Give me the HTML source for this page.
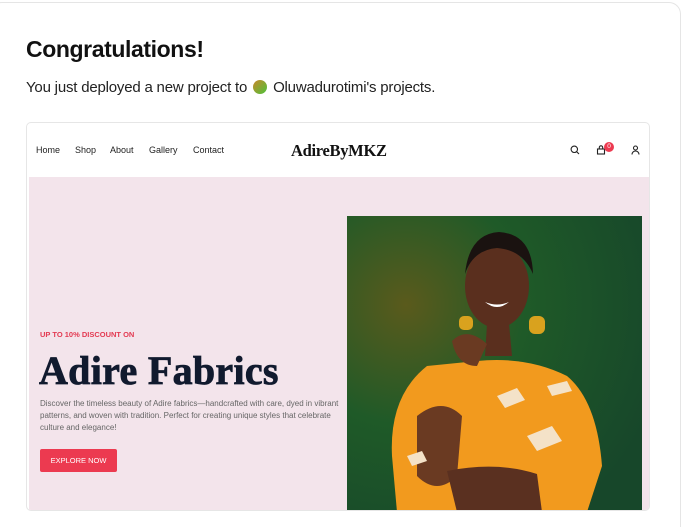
<!DOCTYPE html>
<html style="height:527px;overflow:hidden"><head><meta charset="utf-8"><style>
*{margin:0;padding:0;box-sizing:border-box}
body{width:684px;height:527px;background:#fff;font-family:"Liberation Sans",sans-serif;overflow:hidden;position:relative}
.outer{position:absolute;left:-10px;top:2px;width:691px;height:540px;border:1px solid #e5e5e5;border-bottom:none;border-radius:12px 12px 0 0}
h1{position:absolute;left:26px;top:36px;font-size:23px;font-weight:700;color:#111;letter-spacing:-0.4px}
.sub{position:absolute;left:26px;top:79px;font-size:15px;color:#222;letter-spacing:-0.2px}
.dot{display:inline-block;width:14px;height:14px;border-radius:50%;background:linear-gradient(135deg,#c9882a,#4cc23a);vertical-align:-2px;margin:0 2px}
.card{position:absolute;left:26px;top:122px;width:624px;height:389px;border:1px solid #e6e6e6;border-radius:5px;overflow:hidden;background:#fff}
.nav{position:absolute;top:22px;font-size:9px;color:#222}
.logo{position:absolute;left:264px;top:18px;font-family:"Liberation Serif",serif;font-weight:700;font-size:16.5px;color:#111;letter-spacing:-0.3px}
.hero{position:absolute;left:2px;top:54px;width:620px;height:340px;background:#f3e4eb}
.disc{position:absolute;left:11px;top:153px;font-size:7.5px;color:#e33a52;font-weight:600}
.title{position:absolute;left:10px;top:170px;font-family:"Liberation Serif",serif;font-weight:700;font-size:40px;color:#111a2e;letter-spacing:0.3px;-webkit-text-stroke:0.8px #111a2e}
.desc{position:absolute;left:11px;top:221px;width:300px;font-size:8px;line-height:12px;color:#666}
.btn{position:absolute;left:11px;top:272px;width:77px;height:23px;background:#ec3a50;border-radius:2px;color:#fff;font-size:7.5px;text-align:center;line-height:23px}
.img{position:absolute;left:318px;top:39px;width:295px;height:296px}
</style></head><body>
<div class="outer"></div>
<h1>Congratulations!</h1>
<div class="sub">You just deployed a new project to <span class="dot"></span> Oluwadurotimi's projects.</div>
<div class="card">
<div class="nav" style="left:9px">Home</div>
<div class="nav" style="left:48px">Shop</div>
<div class="nav" style="left:83px">About</div>
<div class="nav" style="left:122px">Gallery</div>
<div class="nav" style="left:166px">Contact</div>
<div class="logo">AdireByMKZ</div>
<svg style="position:absolute;left:543px;top:22px" width="10" height="10" viewBox="0 0 10 10"><circle cx="4.3" cy="4.3" r="3.2" fill="none" stroke="#222" stroke-width="1.1"/><path d="M6.6 6.6L9 9" stroke="#222" stroke-width="1.1"/></svg>
<svg style="position:absolute;left:569px;top:22px" width="10" height="10" viewBox="0 0 10 10"><rect x="1.5" y="4" width="7" height="5" fill="none" stroke="#222" stroke-width="1.1"/><path d="M3.3 4V2.5a1.7 1.7 0 0 1 3.4 0V4" fill="none" stroke="#222" stroke-width="1.1"/></svg>
<div style="position:absolute;left:577px;top:19px;width:10px;height:10px;border-radius:50%;background:#ec3a50;color:#fff;font-size:6.5px;text-align:center;line-height:10px">0</div>
<svg style="position:absolute;left:604px;top:22px" width="9" height="10" viewBox="0 0 9 10"><circle cx="4.5" cy="3" r="2" fill="none" stroke="#222" stroke-width="1.1"/><path d="M1 9.5a3.5 3.5 0 0 1 7 0" fill="none" stroke="#222" stroke-width="1.1"/></svg>
<div class="hero">
<div class="disc">UP TO 10% DISCOUNT ON</div>
<div class="title">Adire Fabrics</div>
<div class="desc">Discover the timeless beauty of Adire fabrics—handcrafted with care, dyed in vibrant patterns, and woven with tradition. Perfect for creating unique styles that celebrate culture and elegance!</div>
<div class="btn">EXPLORE NOW</div>
<svg class="img" viewBox="0 0 295 296">
<defs><radialGradient id="bg" cx="0.2" cy="0.3" r="0.9"><stop offset="0" stop-color="#5a5a1c"/><stop offset="0.45" stop-color="#1f5a28"/><stop offset="1" stop-color="#17472a"/></radialGradient></defs>
<rect width="295" height="296" fill="url(#bg)"/>
<path d="M50 296 L45 240 Q42 180 80 150 L130 145 Q180 140 220 160 Q250 185 255 250 L240 296Z" fill="#f29a1e"/>
<path d="M70 200 Q95 180 115 200 L110 260 Q90 280 70 260Z" fill="#6a3a22"/>
<path d="M100 255 Q150 245 190 258 L195 296 L110 296Z" fill="#5a3020"/>
<ellipse cx="150" cy="70" rx="32" ry="42" fill="#5a2f1e"/>
<path d="M118 58 Q122 18 152 16 Q185 18 186 58 Q176 34 150 32 Q126 34 118 58Z" fill="#1a1210"/>
<path d="M140 108 L162 108 L165 140 L138 140Z" fill="#5a2f1e"/>
<path d="M138 86 Q150 96 162 86 Q150 91 138 86Z" fill="#fff"/>
<rect x="182" y="100" width="16" height="18" rx="6" fill="#d9a21e"/>
<rect x="112" y="100" width="14" height="14" rx="5" fill="#d9a21e"/>
<path d="M105 125 Q120 110 140 128 L130 150 Q110 150 105 125Z" fill="#6a3a22"/>
<path d="M150 180 l20 -8 l8 12 l-20 8z M60 240 l15 -5 l5 10 l-15 5z M180 220 l25 -10 l10 15 l-25 10z M200 170 l20 -5 l5 10 l-20 5z" fill="#f4e2c8"/>
</svg>
</div>
</div>
</body></html>
